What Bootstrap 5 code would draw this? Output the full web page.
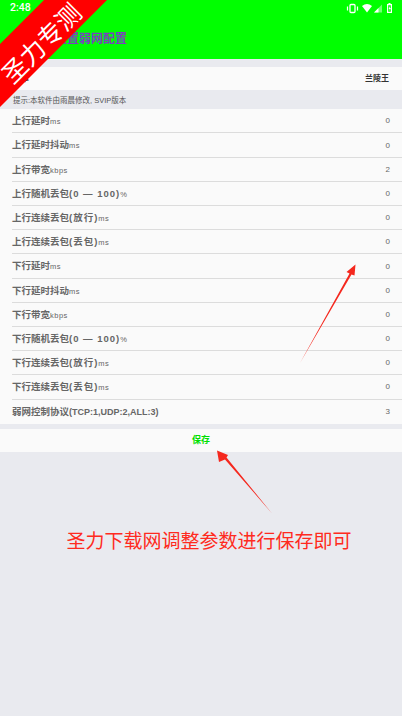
<!DOCTYPE html>
<html lang="zh-CN">
<head>
    <meta charset="UTF-8">
    <meta name="viewport" content="width=device-width, initial-scale=1.0">
    <title>弱网配置</title>
    <link href="https://cdn.jsdelivr.net/npm/bootstrap@5.3.0/dist/css/bootstrap.min.css" rel="stylesheet">
    <style>
        body{background:#e9eaef;font-family:"Liberation Sans","Noto Sans CJK SC",sans-serif;height:716px;overflow:hidden;position:relative;}
        .top-head{background:#00ff00;height:59px;}
        .status-time{color:#fff;font-family:Roboto,sans-serif;font-weight:500;font-size:10.5px;left:10px;top:2px;position:absolute;line-height:12px;}
        .status-icons{height:14px;left:345px;top:1px;position:absolute;}
        .head-title{color:#7b3fc0;font-size:12px;font-weight:700;line-height:14px;padding:32px 0 0 55px;}
        .white-row{background:#fafafa;height:23px;}
        .info-row{margin-top:8px;padding:0 13px;font-size:8px;font-weight:700;color:#333;}
        .hint-text{height:19.3px;font-size:7.5px;color:#555;padding:1px 13px 0;}
        .param-list{background:#fafafa;}
        .param-row{height:24.2px;margin-left:12px;padding:1px 12px 0 0;border-bottom:1px solid #dcdcdc;font-size:9.5px;color:#666;font-weight:700;}
        .param-row:last-child{border-bottom:0;}
        .param-row small{font-size:7.5px;font-weight:400;letter-spacing:.5px;}
        .param-row .val{font-size:8px;font-weight:400;}
        .wide-part{letter-spacing:1px;}
        .proto-part{font-size:9px;}
        .save-row{margin-top:5.500px;padding-top:1px;color:#00e000;font-size:9px;font-weight:700;}
        .caption-text{color:#ff2a20;font-size:19px;line-height:24px;margin-top:77.500px;padding-left:16px;}
        .corner-mark{left:0;top:0;position:absolute;}
        .corner-text{color:#fff;font-size:25px;line-height:25px;left:42px;top:44px;position:absolute;transform:translate(-50%,-50%) rotate(-45deg);white-space:nowrap;}
        .arrow-layer{left:0;top:0;position:absolute;}
    </style>
</head>
<body>
    <div class="top-head">
        <div class="head-title">设置弱网配置</div>
    </div>
    <span class="status-time">2:48</span>
    <svg class="status-icons" width="49" height="14" viewBox="0 0 49 14">
        <!-- vibrate -->
        <rect x="5" y="3.500" width="5" height="8" rx="1" fill="none" stroke="#fff" stroke-width="1.300"/>
        <path d="M2.500 5.500v4M12.500 5.500v4" stroke="#fff" stroke-width="1.200"/>
        <!-- wifi -->
        <path d="M17 5Q22 1 27 5L22 11.500Z" fill="#fff"/>
        <!-- signal -->
        <path d="M29 11.500L37 3.500V11.500Z" fill="#fff" opacity=".45"/>
        <path d="M29 11.500L33.500 7V11.500Z" fill="#fff"/>
        <!-- battery -->
        <path d="M42 3h1.500V2h2v1H47v9h-5zM43.200 4.200v6.600h2.600V4.200z" fill="#fff"/>
        <path d="M44.800 5L43.700 8h1L44.200 10.200 46 7h-1z" fill="#fff"/>
    </svg>

    <div class="white-row info-row d-flex justify-content-between align-items-center">
        <span>版本</span>
        <span>兰陵王</span>
    </div>
    <div class="hint-text d-flex align-items-center">提示:本软件由雨晨修改, SVIP版本</div>

    <div class="param-list">
        <div class="param-row d-flex justify-content-between align-items-center"><span>上行延时<small>ms</small></span><span class="val">0</span></div>
        <div class="param-row d-flex justify-content-between align-items-center"><span>上行延时抖动<small>ms</small></span><span class="val">0</span></div>
        <div class="param-row d-flex justify-content-between align-items-center"><span>上行带宽<small>kbps</small></span><span class="val">2</span></div>
        <div class="param-row d-flex justify-content-between align-items-center"><span>上行随机丢包<span class="wide-part">(0 — 100)</span><small>%</small></span><span class="val">0</span></div>
        <div class="param-row d-flex justify-content-between align-items-center"><span>上行连续丢包<span class="wide-part">(放行)</span><small>ms</small></span><span class="val">0</span></div>
        <div class="param-row d-flex justify-content-between align-items-center"><span>上行连续丢包<span class="wide-part">(丢包)</span><small>ms</small></span><span class="val">0</span></div>
        <div class="param-row d-flex justify-content-between align-items-center"><span>下行延时<small>ms</small></span><span class="val">0</span></div>
        <div class="param-row d-flex justify-content-between align-items-center"><span>下行延时抖动<small>ms</small></span><span class="val">0</span></div>
        <div class="param-row d-flex justify-content-between align-items-center"><span>下行带宽<small>kbps</small></span><span class="val">0</span></div>
        <div class="param-row d-flex justify-content-between align-items-center"><span>下行随机丢包<span class="wide-part">(0 — 100)</span><small>%</small></span><span class="val">0</span></div>
        <div class="param-row d-flex justify-content-between align-items-center"><span>下行连续丢包<span class="wide-part">(放行)</span><small>ms</small></span><span class="val">0</span></div>
        <div class="param-row d-flex justify-content-between align-items-center"><span>下行连续丢包<span class="wide-part">(丢包)</span><small>ms</small></span><span class="val">0</span></div>
        <div class="param-row d-flex justify-content-between align-items-center"><span>弱网控制协议<span class="proto-part">(TCP:1,UDP:2,ALL:3)</span></span><span class="val">3</span></div>
    </div>

    <div class="white-row save-row d-flex justify-content-center align-items-center">保存</div>
    <div class="caption-text text-center">圣力下载网调整参数进行保存即可</div>

    <svg class="arrow-layer" width="402" height="716" viewBox="0 0 402 716">
        <path d="M300 363L349.500 273.500L346.500 272L355.500 264.500L354.500 275.500L351.500 274.500Z" fill="#f5281e"/>
        <path d="M272 513.500L225 459.500L219 462L217 450.500L228 455L226.500 457.500Z" fill="#f5281e"/>
    </svg>

    <svg class="corner-mark" width="110" height="110" viewBox="0 0 110 110">
        <path d="M44 0H107L0 107V44Z" fill="#ff0000"/>
    </svg>
    <div class="corner-text">圣力专测</div>

    <script src="https://cdn.jsdelivr.net/npm/bootstrap@5.3.0/dist/js/bootstrap.bundle.min.js"></script>
</body>
</html>
